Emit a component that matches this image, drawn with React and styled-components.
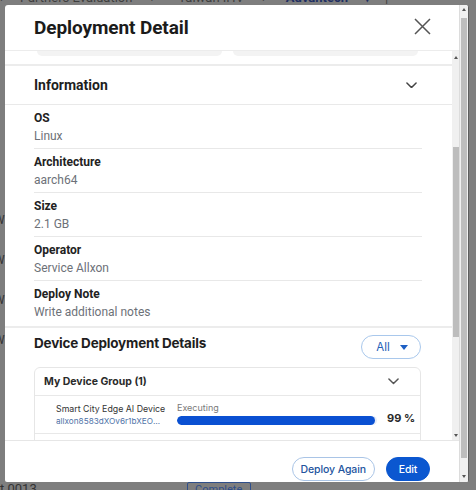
import React from "react";
import styled, { createGlobalStyle } from "styled-components";

const Global = createGlobalStyle`
  html, body { margin: 0; padding: 0; }
  body { font-family: Roboto, "Liberation Sans", sans-serif; background: #7e7e7e; }
  * { box-sizing: border-box; }
`;

const Screen = styled.div`
  position: relative;
  width: 476px;
  height: 490px;
  overflow: hidden;
  background: #7e7e7e;
`;

/* ---------- page behind the dim overlay ---------- */
const Breadcrumb = styled.div`
  position: absolute;
  top: -11px;
  left: 0;
  display: flex;
  align-items: center;
  gap: 14px;
  height: 16px;
  font-size: 13px;
  color: #3f3f3f;
  white-space: nowrap;
`;
const Crumb = styled.span`
  color: ${(p) => (p.$active ? "#1f2f63" : "#3f3f3f")};
  font-weight: ${(p) => (p.$active ? 700 : 400)};
  margin-left: ${(p) => p.$ml || 0}px;
`;
const BehindBottom = styled.div`
  position: absolute;
  top: 482px;
  left: 0;
  display: flex;
  align-items: flex-start;
  gap: 150px;
  font-size: 13px;
  color: #333;
  line-height: 14px;
`;
const BehindButton = styled.span`
  display: inline-block;
  width: 64px;
  height: 16px;
  border: 1px solid #2f4f8a;
  border-radius: 2px;
  color: #2f4f8a;
  font-size: 11px;
  text-align: center;
  line-height: 14px;
`;
const BehindSide = styled.div`
  position: absolute;
  left: -6px;
  top: 214px;
  display: flex;
  flex-direction: column;
  gap: 28px;
  font-size: 12px;
  color: #333;
  line-height: 12px;
`;

/* ---------- modal ---------- */
const Modal = styled.div`
  position: absolute;
  left: 5px;
  top: 5px;
  width: 464px;
  height: 477px;
  background: #fff;
  border-radius: 3px 3px 2px 2px;
  display: flex;
  overflow: hidden;
  border-right: 1px solid #5d5d5d;
`;
const ModalMain = styled.div`
  width: 454px;
  display: flex;
  flex-direction: column;
`;
const Header = styled.div`
  height: 45px;
  flex-shrink: 0;
  display: flex;
  align-items: center;
  justify-content: space-between;
  padding: 0 28px 0 29px;
`;
const Title = styled.h1`
  margin: 0;
  font-size: 19px;
  font-weight: 700;
  color: #1b1b1b;
  letter-spacing: -0.1px;
`;
const CloseBtn = styled.button`
  border: 0;
  background: none;
  padding: 0;
  width: 17px;
  height: 17px;
  display: flex;
  margin-top: -2px;
`;

const Body = styled.div`
  height: 390px;
  flex-shrink: 0;
  display: flex;
  border-top: 1px solid #ececec;
`;
const BodyContent = styled.div`
  flex: 1;
  overflow: hidden;
  display: flex;
  flex-direction: column;
  & > * { flex-shrink: 0; }
`;
const CutStrip = styled.div`
  height: 15px;
  display: flex;
  gap: 11px;
  padding: 0 34px 0 32px;
  border-bottom: 2px solid #ececec;
`;
const CutPill = styled.div`
  flex: 1;
  height: 5px;
  background: #f3f3f3;
  border-radius: 0 0 6px 6px;
`;

const InfoHeader = styled.div`
  height: 39px;
  display: flex;
  align-items: center;
  justify-content: space-between;
  padding: 0 35px 0 29px;
  border-bottom: 1px solid #e9e9e9;
`;
const SectionTitle = styled.div`
  font-size: 14px;
  font-weight: 700;
  color: #1e1e1e;
  line-height: 18px;
`;
const Fields = styled.div`
  padding: 0 30px 0 29px;
  border-bottom: 2px solid #ececec;
`;
const Field = styled.div`
  padding: 4px 0 ${(p) => (p.$last ? 5 : 3)}px;
  border-bottom: ${(p) => (p.$last ? "0" : "1px solid #e8e8e8")};
  display: flex;
  flex-direction: column;
`;
const Label = styled.div`
  font-size: 12px;
  font-weight: 700;
  color: #222;
  line-height: 18px;
`;
const Value = styled.div`
  font-size: 12px;
  color: #6d7178;
  line-height: 18px;
`;

const DeviceSection = styled.div`
  padding: 5px 31px 0 29px;
  display: flex;
  flex-direction: column;
  gap: 8px;
`;
const DeviceHead = styled.div`
  display: flex;
  justify-content: space-between;
  align-items: flex-start;
`;
const DeviceTitle = styled(SectionTitle)`
  font-family: Inter, "Open Sans", sans-serif;
  font-size: 13.5px;
  letter-spacing: -0.2px;
  line-height: 20px;
`;
const FilterPill = styled.button`
  margin-top: 2px;
  width: 60px;
  height: 24px;
  border: 1.5px solid #a9c8ec;
  border-radius: 12px;
  background: #fff;
  color: #2360b8;
  font-family: Inter, sans-serif;
  font-size: 11.5px;
  display: flex;
  align-items: center;
  justify-content: center;
  gap: 10px;
  padding: 0 0 0 2px;
`;
const Caret = styled.span`
  width: 0;
  height: 0;
  border-left: 4.5px solid transparent;
  border-right: 4.5px solid transparent;
  border-top: 5px solid #1d5fc4;
`;
const GroupCard = styled.div`
  border: 1px solid #e6e6e6;
  border-radius: 6px;
  display: flex;
  flex-direction: column;
`;
const GroupHead = styled.div`
  height: 28px;
  display: flex;
  align-items: center;
  justify-content: space-between;
  padding: 0 21px 0 9px;
  border-bottom: 1px solid #e8e8e8;
  font-family: Inter, sans-serif;
  font-size: 10.5px;
  font-weight: 700;
  color: #2a2a2a;
`;
const DeviceRow = styled.div`
  height: 38px;
  display: grid;
  grid-template-columns: 111px 200px auto;
  column-gap: 10px;
  align-items: center;
  padding-left: 21px;
  border-bottom: 1px solid #e8e8e8;
`;
const DeviceName = styled.div`
  display: flex;
  flex-direction: column;
  font-family: Inter, sans-serif;
  min-width: 0;
`;
const Name = styled.span`
  font-size: 8.8px;
  color: #333;
  line-height: 12px;
  white-space: nowrap;
`;
const DeviceId = styled.span`
  font-size: 8.2px;
  color: #4f73a8;
  line-height: 12px;
  white-space: nowrap;
  overflow: hidden;
  text-overflow: ellipsis;
`;
const ProgressCol = styled.div`
  display: flex;
  flex-direction: column;
  gap: 2px;
  margin-top: -3px;
`;
const Status = styled.span`
  font-family: Inter, sans-serif;
  font-size: 9px;
  color: #7a7a7a;
  line-height: 12px;
`;
const Track = styled.div`
  height: 9px;
  border-radius: 5px;
  background: #e6ecf7;
  overflow: hidden;
`;
const Fill = styled.div`
  height: 100%;
  background: #0a50d2;
  border-radius: 5px;
`;
const Percent = styled.span`
  font-family: Inter, sans-serif;
  font-size: 11px;
  font-weight: 700;
  color: #2a2a2a;
  margin-top: 7px;
  white-space: nowrap;
`;

const Footer = styled.div`
  flex: 1;
  border-top: 1px solid #e6e6e6;
  display: flex;
  justify-content: flex-end;
  align-items: flex-start;
  gap: 11px;
  padding: 16px 29px 0 0;
`;
const Button = styled.button`
  height: 24px;
  min-width: ${(p) => (p.$primary ? 44 : 83)}px;
  padding: 0 ${(p) => (p.$primary ? 10 : 8)}px;
  border-radius: 12px;
  font-family: Inter, sans-serif;
  font-size: 10.5px;
  font-weight: 500;
  letter-spacing: -0.1px;
  border: 1.5px solid ${(p) => (p.$primary ? "#0b57d0" : "#a9c4e6")};
  background: ${(p) => (p.$primary ? "#0b57d0" : "#fff")};
  color: ${(p) => (p.$primary ? "#fff" : "#22549e")};
`;

/* ---------- scrollbars ---------- */
const ScrollBar = styled.div`
  width: ${(p) => p.$w}px;
  flex-shrink: 0;
  background: #f0f0f0;
  display: flex;
  flex-direction: column;
  align-items: center;
  justify-content: space-between;
  padding: ${(p) => p.$pad};
  border-left: ${(p) => (p.$outer ? "1px solid #dcdcdc" : "0")};
`;
const Arrow = styled.span`
  width: 0;
  height: 0;
  border-left: 2.5px solid transparent;
  border-right: 2.5px solid transparent;
  ${(p) => (p.$down ? "border-top: 3px solid #555;" : "border-bottom: 3px solid #555;")}
`;
const ThumbTrack = styled.div`
  flex: 1;
  width: 100%;
  display: flex;
  flex-direction: column;
  align-items: center;
`;
const Thumb = styled.div`
  width: ${(p) => p.$w}px;
  background: #bdbdbd;
  margin-top: ${(p) => p.$top}px;
  height: ${(p) => p.$h}px;
`;

const Chevron = ({ size = 12, color = "#444" }) => (
  <svg width={size} height={size * 0.6} viewBox="0 0 12 7" fill="none">
    <path d="M1 1l5 5 5-5" stroke={color} strokeWidth="1.6" strokeLinecap="round" strokeLinejoin="round" />
  </svg>
);

const fields = [
  ["OS", "Linux"],
  ["Architecture", "aarch64"],
  ["Size", "2.1 GB"],
  ["Operator", "Service Allxon"],
  ["Deploy Note", "Write additional notes"],
];

export default function App() {
  return (
    <>
      <Global />
      <Screen>
        <Breadcrumb>
          <Crumb>›</Crumb>
          <Crumb $ml={2}>Partners Evaluation</Crumb>
          <Crumb $ml={4}>›</Crumb>
          <Crumb $ml={10}>Taiwan IHV</Crumb>
          <Crumb $ml={4}>›</Crumb>
          <Crumb $active $ml={6}>Advantech</Crumb>
          <Crumb $active $ml={2}>▾</Crumb>
          <Crumb>|</Crumb>
        </Breadcrumb>
        <BehindSide>
          <span>W</span>
          <span>W</span>
          <span>W</span>
          <span>W</span>
          <span>t</span>
        </BehindSide>
        <BehindBottom>
          <span>t 0013</span>
          <BehindButton>Complete</BehindButton>
        </BehindBottom>

        <Modal>
          <ModalMain>
            <Header>
              <Title>Deployment Detail</Title>
              <CloseBtn aria-label="Close">
                <svg width="17" height="17" viewBox="0 0 17 17">
                  <path d="M1 1l15 15M16 1L1 16" stroke="#555" strokeWidth="1.5" />
                </svg>
              </CloseBtn>
            </Header>
            <Body>
              <BodyContent>
                <CutStrip>
                  <CutPill />
                  <CutPill />
                </CutStrip>
                <InfoHeader>
                  <SectionTitle>Information</SectionTitle>
                  <Chevron size={11} />
                </InfoHeader>
                <Fields>
                  {fields.map(([l, v], i) => (
                    <Field key={l} $last={i === fields.length - 1}>
                      <Label>{l}</Label>
                      <Value>{v}</Value>
                    </Field>
                  ))}
                </Fields>
                <DeviceSection>
                  <DeviceHead>
                    <DeviceTitle>Device Deployment Details</DeviceTitle>
                    <FilterPill>
                      All <Caret />
                    </FilterPill>
                  </DeviceHead>
                  <GroupCard>
                    <GroupHead>
                      My Device Group (1)
                      <Chevron size={11} color="#555" />
                    </GroupHead>
                    <DeviceRow>
                      <DeviceName>
                        <Name>Smart City Edge AI Device</Name>
                        <DeviceId>allxon8583dXOv6r1bXEOMfGh2</DeviceId>
                      </DeviceName>
                      <ProgressCol>
                        <Status>Executing</Status>
                        <Track>
                          <Fill style={{ width: "99%" }} />
                        </Track>
                      </ProgressCol>
                      <Percent>99 %</Percent>
                    </DeviceRow>
                    <DeviceRow />
                  </GroupCard>
                </DeviceSection>
              </BodyContent>
              <ScrollBar $w={7} $pad="5px 0 3px">
                <Arrow />
                <ThumbTrack>
                  <Thumb $w={6} $top={88} $h={190} />
                </ThumbTrack>
                <Arrow $down />
              </ScrollBar>
            </Body>
            <Footer>
              <Button>Deploy Again</Button>
              <Button $primary>Edit</Button>
            </Footer>
          </ModalMain>
          <ScrollBar $w={9} $pad="3px 0 4px" $outer>
            <Arrow />
            <ThumbTrack>
              <Thumb $w={6} $top={7} $h={440} />
            </ThumbTrack>
            <Arrow $down />
          </ScrollBar>
        </Modal>
      </Screen>
    </>
  );
}
